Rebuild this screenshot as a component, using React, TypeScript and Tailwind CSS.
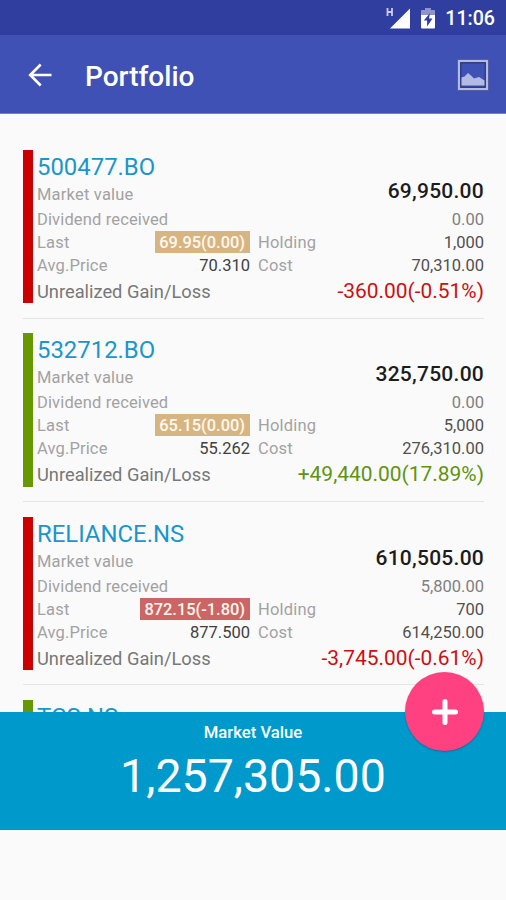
type Holding = {
  symbol: string;
  bar: string;
  marketValue: string;
  dividend: string;
  last: string;
  lastColor: string;
  holding: string;
  avgPrice: string;
  cost: string;
  gain: string;
  gainColor: string;
};

const RED = "bg-[#cc0000]";
const GREEN = "bg-[#669900]";

const holdings: Holding[] = [
  {
    symbol: "500477.BO", bar: RED, marketValue: "69,950.00", dividend: "0.00",
    last: "69.95(0.00)", lastColor: "bg-[#d6b583]", holding: "1,000",
    avgPrice: "70.310", cost: "70,310.00", gain: "-360.00(-0.51%)", gainColor: "text-[#cc0f0f]"
  },
  {
    symbol: "532712.BO", bar: GREEN, marketValue: "325,750.00", dividend: "0.00",
    last: "65.15(0.00)", lastColor: "bg-[#d6b583]", holding: "5,000",
    avgPrice: "55.262", cost: "276,310.00", gain: "+49,440.00(17.89%)", gainColor: "text-[#5f9410]"
  },
  {
    symbol: "RELIANCE.NS", bar: RED, marketValue: "610,505.00", dividend: "5,800.00",
    last: "872.15(-1.80)", lastColor: "bg-[#cc6666]", holding: "700",
    avgPrice: "877.500", cost: "614,250.00", gain: "-3,745.00(-0.61%)", gainColor: "text-[#cc0f0f]"
  }
];

function StatusBar() {
  return (
    <div className="flex h-[35px] shrink-0 items-center justify-end bg-[#303f9f] pt-[2px] pr-[11px]">
      <svg className="mr-[11px] h-[22px] w-[24px]" viewBox="0 0 24 22">
        <path d="M24 .5v20H4z" fill="#fff" />
        <path d="M1.500 0v8M6 0v8M1.500 4H6" stroke="#c9cdea" strokeWidth="1.800" fill="none" />
      </svg>
      <svg className="mr-[10px] h-[22px] w-[14px]" viewBox="0 0 14 22">
        <path d="M4 0h6v2h3.200q.8 0 .8.800V10H0V2.800Q0 2 .8 2H4z" fill="#8d95cc" />
        <path d="M0 7h14v12.500q0 1-1 1H1q-1 0-1-1z" fill="#fff" />
        <path d="M9 5 2.800 12.500h3.300V18.500L11.500 10.500H8z" fill="#303f9f" />
      </svg>
      <span className="text-[19.600px] leading-none font-medium text-white">11:06</span>
    </div>
  );
}

function AppBar() {
  return (
    <header className="flex h-[79px] shrink-0 items-center border-b border-[#7680c4] bg-[#3f51b5] pt-[2px] pr-[16px] pl-[28px]">
      <svg className="h-[24px] w-[24px]" viewBox="0 0 24 24" fill="none" stroke="#fff" strokeWidth="2.600">
        <path d="M23.500 12H2.500M12.700 1.500 2.200 12l10.500 10.500" />
      </svg>
      <h1 className="mt-[3px] ml-[33px] text-[28px] leading-none font-medium text-white">Portfolio</h1>
      <svg className="ml-auto h-[34px] w-[34px]" viewBox="0 0 34 34">
        <rect x="1.500" y="1.500" width="31" height="31" fill="none" stroke="#4b5698" />
        <rect x="3" y="3" width="28" height="28" fill="none" stroke="#b4bbe2" strokeWidth="2.200" />
        <rect x="4.800" y="4.800" width="24.400" height="24.400" fill="none" stroke="#29387f" strokeWidth="1.200" />
        <path d="M5.500 27.500v-8l3-1 3.500-3.500 3 2.500 3 3 5-1.500 5.500 3.500v5z" fill="#b4bbe2" />
      </svg>
    </header>
  );
}

function Symbol({ name }: { name: string }) {
  return <h2 className="h-[31px] text-[23.900px] leading-[34px] text-[#1a96cb]">{name}</h2>;
}

function HoldingItem({ item }: { item: Holding }) {
  return (
    <article className="h-[183.300px] shrink-0">
      <div className="flex h-[153.300px]">
        <div className={`w-[9.500px] shrink-0 ${item.bar}`} />
        <div className="ml-[4.500px] flex-1 text-[16.500px] text-[#a2a2a2]">
          <Symbol name={item.symbol} />
          <div className="flex h-[27px] justify-between leading-[27px]">
            <span className="tracking-[0.200px]">Market value</span>
            <span className="text-[21px] leading-[21px] font-medium tracking-[0.250px] text-[#1c1c1c]">{item.marketValue}</span>
          </div>
          <div className="flex h-[23px] justify-between leading-[24px]">
            <span className="tracking-[0.140px]">Dividend received</span>
            <span className="text-[#808080]">{item.dividend}</span>
          </div>
          <div className="grid h-[46px] grid-cols-[213px_1fr] gap-x-[8px] leading-[24px]">
            <div className="flex h-[23px] justify-between">
              <span className="tracking-[0.200px]">Last</span>
              <span className={`h-[22px] pr-[5px] pl-[4.500px] text-[16.400px] leading-[24px] font-medium text-[#fff8ec] ${item.lastColor}`}>{item.last}</span>
            </div>
            <div className="flex h-[23px] justify-between">
              <span className="tracking-[0.200px]">Holding</span>
              <span className="text-[#505050]">{item.holding}</span>
            </div>
            <div className="flex h-[23px] justify-between">
              <span className="tracking-[0.140px]">Avg.Price</span>
              <span className="text-[#404040]">{item.avgPrice}</span>
            </div>
            <div className="flex h-[23px] justify-between">
              <span className="tracking-[0.200px]">Cost</span>
              <span className="text-[#505050]">{item.cost}</span>
            </div>
          </div>
          <div className="flex justify-between leading-[30px]">
            <span className="text-[18.300px] text-[#777]">Unrealized Gain/Loss</span>
            <span className={`text-[20.950px] leading-[28px] ${item.gainColor}`}>{item.gain}</span>
          </div>
        </div>
      </div>
      <div className="mt-[14.500px] h-px bg-[#e4e4e4]" />
    </article>
  );
}

export default function App() {
  return (
    <main className="flex h-[900px] w-[506px] flex-col overflow-hidden bg-[#fafafa] font-['Roboto',sans-serif]">
      <StatusBar />
      <AppBar />
      <section className="h-[598px] shrink-0 overflow-hidden pt-[36px] pr-[22px] pl-[23px]">
        {holdings.map((item) => (
          <HoldingItem item={item} key={item.symbol} />
        ))}
        <article className="flex h-[154px]">
          <div className="w-[9.500px] shrink-0 bg-[#669900]" />
          <div className="ml-[4.500px]">
            <Symbol name="TCS.NS" />
          </div>
        </article>
      </section>
      <footer className="relative flex h-[118px] shrink-0 flex-col items-center bg-[#0099cc] text-white">
        <p className="mt-[10px] text-[16.700px] leading-[22px] font-medium">Market Value</p>
        <p className="mt-[4px] text-[46.500px] leading-[56px]">1,257,305.00</p>
        <button className="absolute -top-[40px] right-[22px] flex h-[79px] w-[79px] items-center justify-center rounded-full bg-[#ff4081] shadow-[0_1px_2px_rgba(0,0,0,0.25)]" aria-label="Add">
          <svg className="h-[26px] w-[26px]" viewBox="0 0 26 26">
            <path d="M13 2.500v21M2.500 13h21" stroke="#fff" strokeWidth="5" strokeLinecap="round" />
          </svg>
        </button>
      </footer>
    </main>
  );
}
